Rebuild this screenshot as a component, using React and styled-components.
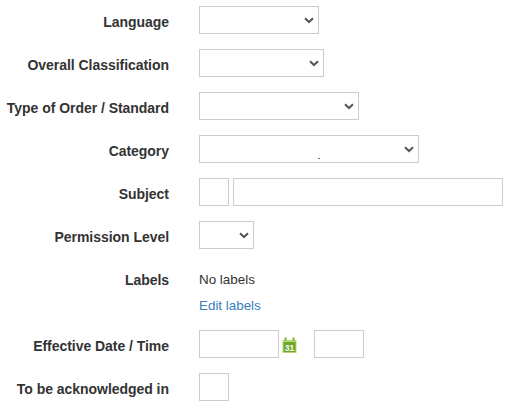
import styled, { createGlobalStyle } from "styled-components";

const GlobalStyle = createGlobalStyle`
  body {
    margin: 0;
    background: #fff;
    font-family: "Liberation Sans", Arial, sans-serif;
    font-size: 14px;
    color: #333;
  }
`;

const Form = styled.form`
  display: flex;
  flex-direction: column;
  gap: 15px;
  padding-top: 6px;
`;

const Row = styled.div`
  display: grid;
  grid-template-columns: 169px 1fr;
  column-gap: 30px;
  align-items: ${(p) => (p.$top ? "start" : "center")};
`;

const Label = styled.label`
  padding-top: ${(p) => (p.$top ? 6 : 4)}px;
  font-weight: 700;
  letter-spacing: -0.04px;
  text-align: right;
  white-space: nowrap;
  line-height: 20px;
`;

const Field = styled.div`
  position: relative;
  display: flex;
  align-items: center;
  gap: ${(p) => p.$gap || 0}px;
`;

const SelectWrap = styled.div`
  position: relative;
  display: flex;
  width: ${(p) => p.$width}px;
`;

const NativeSelect = styled.select`
  width: 100%;
  height: 28px;
  box-sizing: border-box;
  border: 1px solid #ccc;
  border-radius: 0;
  background: #fff;
  appearance: none;
  outline: none;
`;

const Chevron = styled.svg`
  position: absolute;
  right: 5px;
  top: 11px;
  pointer-events: none;
`;

const Input = styled.input`
  width: ${(p) => p.$width}px;
  height: 28px;
  box-sizing: border-box;
  border: 1px solid #ccc;
  border-radius: 0;
  padding: 0 4px;
  background: #fff;
  outline: none;
`;

const Speck = styled.span`
  position: absolute;
  left: 119px;
  top: 23px;
  width: 2px;
  height: 1px;
  background: #a5553a;
`;

const LabelList = styled.div`
  display: flex;
  flex-direction: column;
  gap: 7px;
  padding-top: 6px;
  font-size: 13.4px;
  line-height: 19px;
`;

const NoLabels = styled.span`
  color: #333;
`;

const EditLink = styled.a`
  color: #3a80bd;
  text-decoration: none;
`;

const CalendarButton = styled.button`
  display: flex;
  width: 15px;
  height: 16px;
  margin: 2px 17px 0 3px;
  padding: 0;
  border: none;
  background: none;
`;

function Select({ width }) {
  return (
    <SelectWrap $width={width}>
      <NativeSelect />
      <Chevron width="10" height="7" viewBox="0 0 10 7">
        <polyline points="1,1.2 5,5 9,1.2" fill="none" stroke="#555" strokeWidth="2" />
      </Chevron>
    </SelectWrap>
  );
}

function CalendarIcon() {
  return (
    <svg width="15" height="16" viewBox="0 0 15 16">
      <rect x="0.5" y="3" width="14" height="13" fill="#b5d96f" />
      <rect x="1.5" y="5" width="12" height="10" fill="#6fa82b" />
      <rect x="2.5" y="0.5" width="2" height="3" fill="#7fae3a" />
      <rect x="10.5" y="0.5" width="2" height="3" fill="#7fae3a" />
      <text x="7.5" y="13.5" textAnchor="middle" fontFamily="Liberation Sans" fontSize="8.5" fontWeight="700" fill="#fff">31</text>
    </svg>
  );
}

export default function App() {
  return (
    <>
      <GlobalStyle />
      <Form>
        <Row>
          <Label>Language</Label>
          <Field><Select width={120} /></Field>
        </Row>
        <Row>
          <Label>Overall Classification</Label>
          <Field><Select width={125} /></Field>
        </Row>
        <Row>
          <Label>Type of Order / Standard</Label>
          <Field><Select width={160} /></Field>
        </Row>
        <Row>
          <Label>Category</Label>
          <Field><Select width={220} /><Speck /></Field>
        </Row>
        <Row>
          <Label>Subject</Label>
          <Field $gap={4}><Input $width={30} /><Input $width={270} /></Field>
        </Row>
        <Row>
          <Label>Permission Level</Label>
          <Field><Select width={55} /></Field>
        </Row>
        <Row $top>
          <Label $top>Labels</Label>
          <LabelList>
            <NoLabels>No labels</NoLabels>
            <EditLink href="#">Edit labels</EditLink>
          </LabelList>
        </Row>
        <Row>
          <Label>Effective Date / Time</Label>
          <Field>
            <Input $width={80} />
            <CalendarButton type="button"><CalendarIcon /></CalendarButton>
            <Input $width={50} />
          </Field>
        </Row>
        <Row>
          <Label>To be acknowledged in</Label>
          <Field><Input $width={30} /></Field>
        </Row>
      </Form>
    </>
  );
}
